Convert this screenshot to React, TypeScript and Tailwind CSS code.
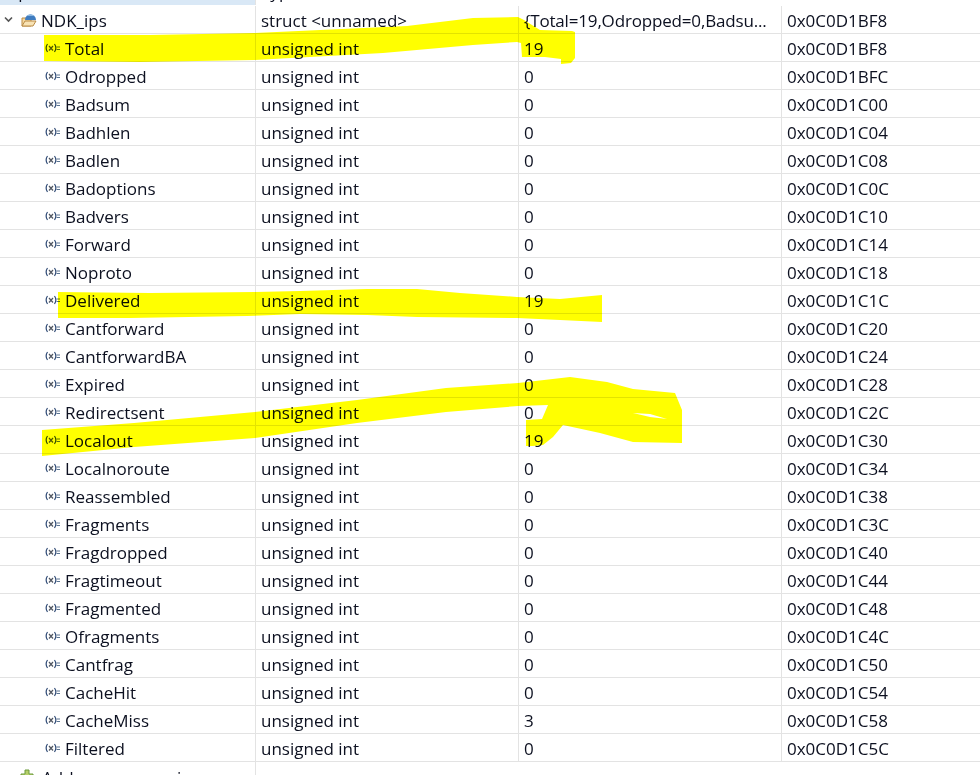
const rows: [string, string, string][] = [
  ["Total", "19", "0x0C0D1BF8"],
  ["Odropped", "0", "0x0C0D1BFC"],
  ["Badsum", "0", "0x0C0D1C00"],
  ["Badhlen", "0", "0x0C0D1C04"],
  ["Badlen", "0", "0x0C0D1C08"],
  ["Badoptions", "0", "0x0C0D1C0C"],
  ["Badvers", "0", "0x0C0D1C10"],
  ["Forward", "0", "0x0C0D1C14"],
  ["Noproto", "0", "0x0C0D1C18"],
  ["Delivered", "19", "0x0C0D1C1C"],
  ["Cantforward", "0", "0x0C0D1C20"],
  ["CantforwardBA", "0", "0x0C0D1C24"],
  ["Expired", "0", "0x0C0D1C28"],
  ["Redirectsent", "0", "0x0C0D1C2C"],
  ["Localout", "19", "0x0C0D1C30"],
  ["Localnoroute", "0", "0x0C0D1C34"],
  ["Reassembled", "0", "0x0C0D1C38"],
  ["Fragments", "0", "0x0C0D1C3C"],
  ["Fragdropped", "0", "0x0C0D1C40"],
  ["Fragtimeout", "0", "0x0C0D1C44"],
  ["Fragmented", "0", "0x0C0D1C48"],
  ["Ofragments", "0", "0x0C0D1C4C"],
  ["Cantfrag", "0", "0x0C0D1C50"],
  ["CacheHit", "0", "0x0C0D1C54"],
  ["CacheMiss", "3", "0x0C0D1C58"],
  ["Filtered", "0", "0x0C0D1C5C"],
];

function VarIcon() {
  return (
    <svg width="16" height="12" viewBox="0 0 16 12" className="shrink-0" fill="none">
      <path d="M2.5 2C1 4.2 1 7.8 2.5 10M9.5 2C11 4.2 11 7.8 9.5 10" stroke="#2f4a75" strokeWidth="1.2" />
      <path d="M4 4l4 4.5M8 4l-4 4.5" stroke="#4f5560" strokeWidth="1.2" />
      <path d="M11.5 5h3.5M11.5 7.5h3.5" stroke="#5a7390" strokeWidth="1" />
    </svg>
  );
}

function Row({ name, value, addr }: { name: string; value: string; addr: string }) {
  return (
    <div className="grid h-7 grid-cols-[256px_263px_263px_198px] border-b border-[#e3e3e3]">
      <div className="flex items-center gap-[4px] border-r border-[#e3e3e3] pl-[45px]">
        <VarIcon />
        <span className="pt-[2px] leading-[25px]">{name}</span>
      </div>
      <div className="truncate border-r border-[#e3e3e3] pl-[5px] pt-[2px] leading-[25px]">unsigned int</div>
      <div className="truncate border-r border-[#e3e3e3] pl-[5px] pt-[2px] leading-[25px]">{value}</div>
      <div className="truncate pl-[5px] pt-[2px] leading-[25px]">{addr}</div>
    </div>
  );
}

export default function App() {
  return (
    <div className="relative h-[775px] w-[980px] overflow-hidden bg-white text-[17px] text-[#0c1020] [font-family:'Open_Sans','Noto_Sans',sans-serif]">
      <div className="grid h-[5px] grid-cols-[256px_263px_263px_198px] overflow-hidden">
        <div className="-mt-[11px] h-[16px] border-r border-[#e3e3e3] bg-[#d9e8f6] leading-[6px]">Expression</div>
        <div className="-mt-[11px] h-[16px] pl-[5px] leading-[6px]">Type</div>
        <div className="-mt-[11px] h-[16px] pl-[5px] leading-[6px]">Value</div>
        <div className="-mt-[11px] h-[16px] pl-[5px] leading-[6px]">Address</div>
      </div>
      <div className="h-px" />
      <div className="grid h-7 grid-cols-[256px_263px_263px_198px] border-b border-[#e3e3e3]">
        <div className="flex items-center border-r border-[#e3e3e3] pl-[2px]">
          <svg width="14" height="14" viewBox="0 0 14 14" className="mr-[4px]" fill="none">
            <path d="M3 4.5l3.5 3.5L10 4.5" stroke="#555" strokeWidth="1.6" />
          </svg>
          <svg width="18" height="16" viewBox="0 0 18 16" className="mr-[3px]" fill="none">
            <path d="M2 6h5l1 1h3v7H2z" fill="#f5d9a0" stroke="#b98a45" />
            <path d="M2 14l3-5h11l-3 5z" fill="#f8e3b5" stroke="#b98a45" />
            <path d="M5 8a5.5 5.5 0 0 1 11 0z" fill="#3f7cc0" />
            <path d="M6.5 4a5.5 5.5 0 0 1 8 0z" fill="#8db8e2" />
          </svg>
          <span className="pt-[2px] leading-[25px]">NDK_ips</span>
        </div>
        <div className="border-r border-[#e3e3e3] pl-[5px] pt-[2px] leading-[25px]">struct &lt;unnamed&gt;</div>
        <div className="truncate border-r border-[#e3e3e3] pl-[5px] pt-[2px] leading-[25px] tracking-[-0.17px]">{"{Total=19,Odropped=0,Badsu..."}</div>
        <div className="pl-[5px] pt-[2px] leading-[25px]">0x0C0D1BF8</div>
      </div>
      {rows.map(([name, value, addr]) => (
        <Row key={name} name={name} value={value} addr={addr} />
      ))}
      <div className="grid h-7 grid-cols-[256px_724px]">
        <div className="flex items-center gap-[8px] border-r border-[#e3e3e3] pl-[20px]">
          <svg width="14" height="14" viewBox="0 0 14 14" fill="none">
            <path d="M5 1h4v4h4v4H9v4H5V9H1V5h4z" fill="#b5cf6a" stroke="#6b9a3a" />
          </svg>
          <span className="pt-[2px] leading-[25px]">Add new expression</span>
        </div>
      </div>
      <svg className="pointer-events-none absolute left-0 top-0 mix-blend-multiply" width="980" height="775" viewBox="0 0 980 775" fill="#ffff00" fillRule="evenodd">
        <path d="M44 35L150 35L255 33L407 26L473 18L518 17L524 20L540 30L572 31L575 32L575 58L571 63L561 64L561 59L545 57L522 57L521 43L517 42L473 45L383 53L255 60L140 62L44 61Z" />
        <path d="M58 292L150 293L255 292L300 291L367 289L417 289L460 293L517 297L560 299L602 295L602 322L560 320L517 318L417 317L367 315L300 314L247 316L130 318L58 318Z" />
        <path d="M42 430L134 423L255 412L357 400L446 388L518 383L570 377L607 382L633 389L675 393L682 410L682 443L633 442L600 433L563 425L553 437L543 445L533 446L526 446L526 420L542 419L548 405L518 406L446 412L357 423L255 438L134 447L42 456Z M633 413L650 414L667 419L650 417Z" />
      </svg>
    </div>
  );
}
